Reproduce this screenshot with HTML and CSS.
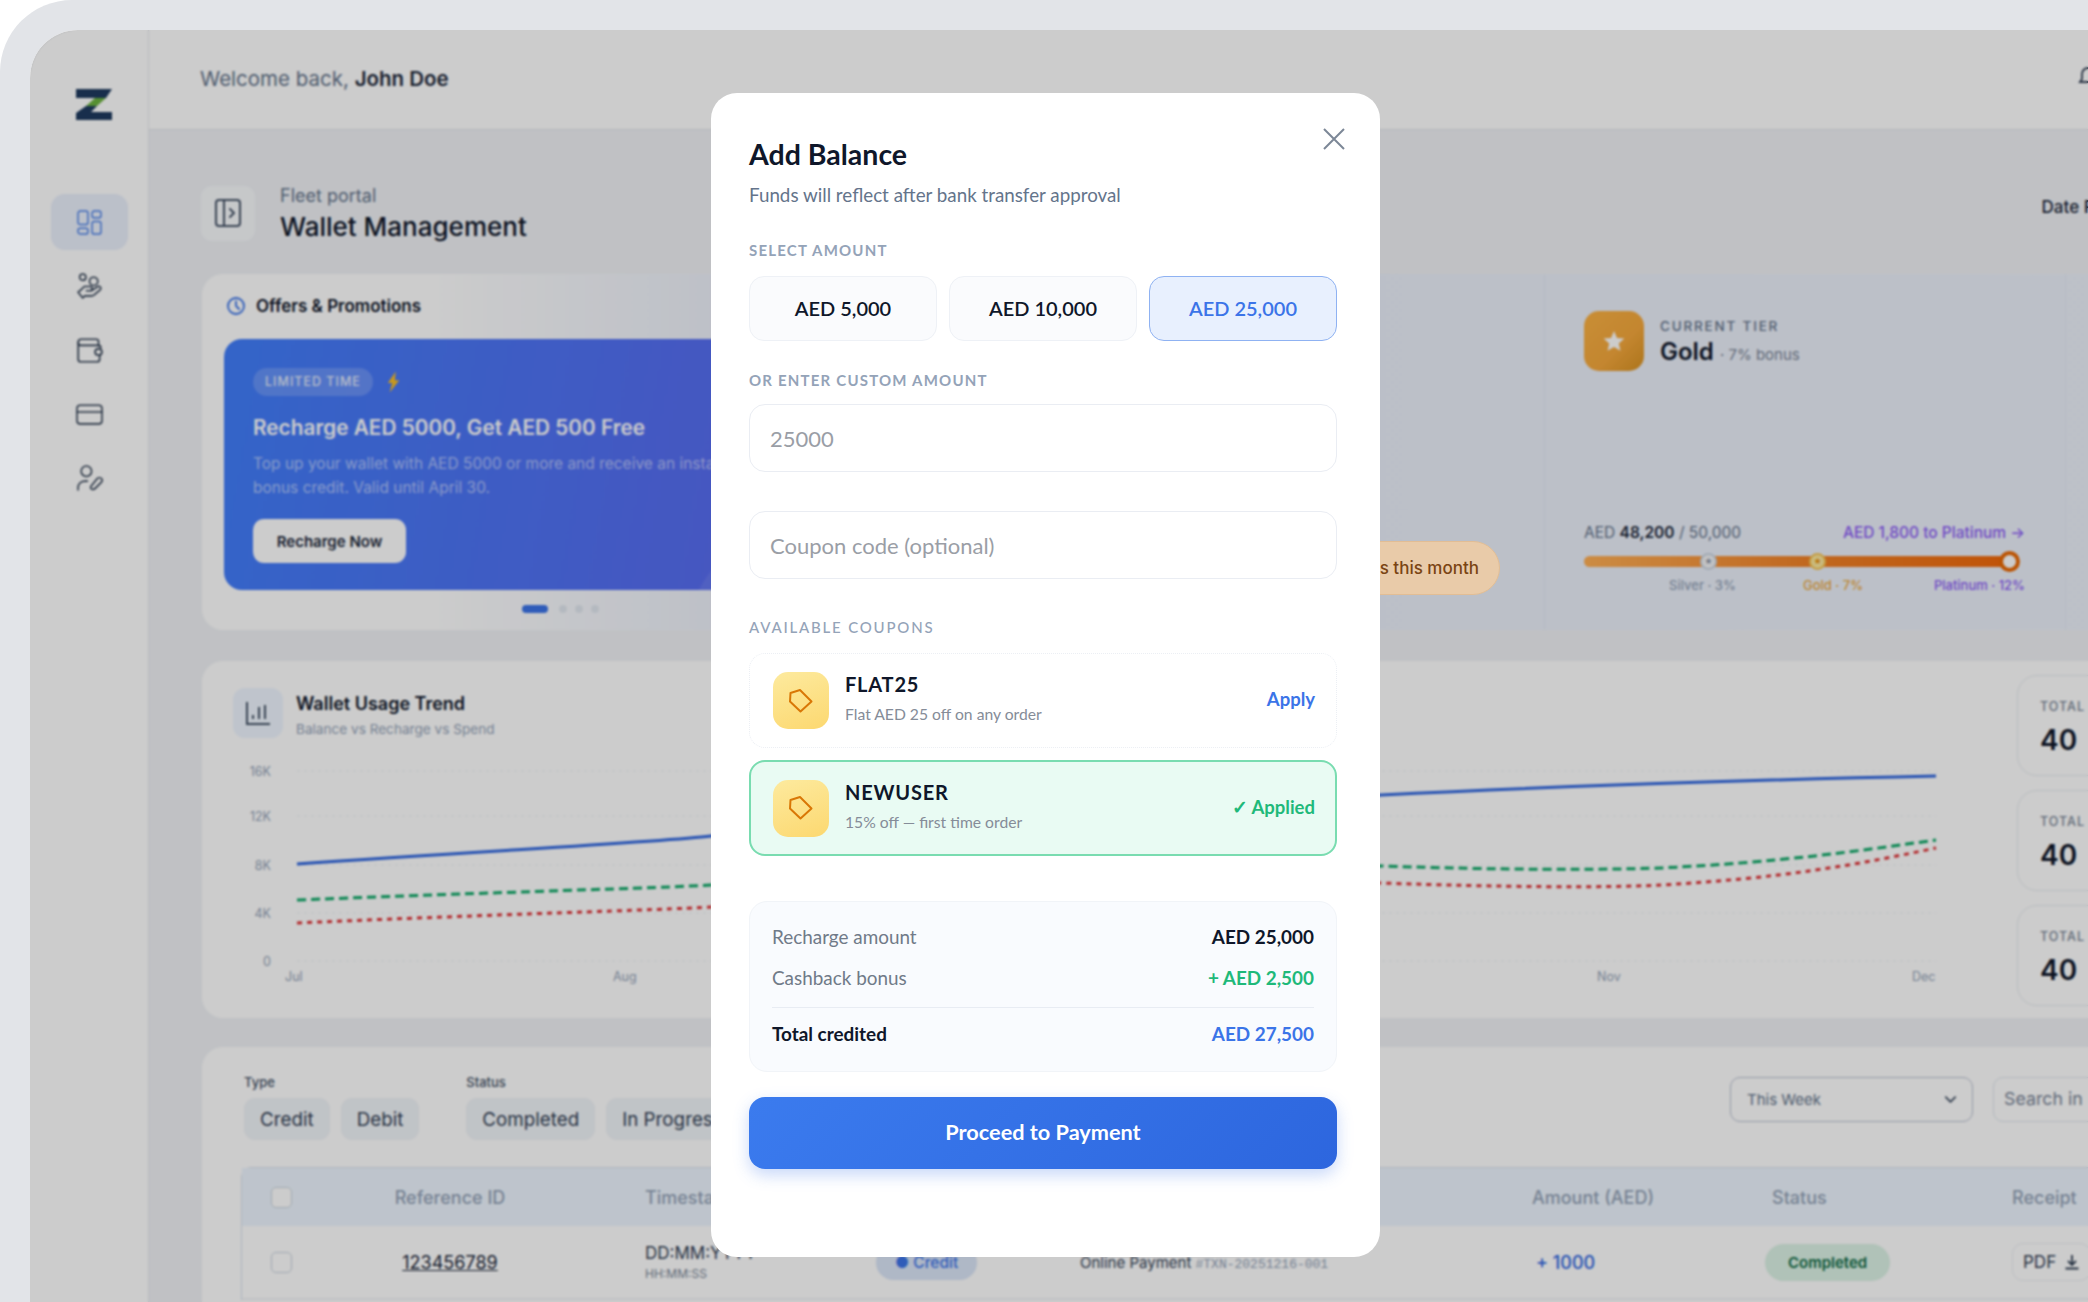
FILE: index.html
```html
<!DOCTYPE html>
<html lang="en">
<head>
<meta charset="utf-8">
<title>Wallet Management</title>
<link rel="stylesheet" href="styles.css">
</head>
<body>
<div class="shell">
  <div class="app">
    <aside class="sidebar">
      <svg class="logo" viewBox="0 0 36 31"><path fill="#1e3a5f" d="M0 0H36L30 9H0ZM10 17H21L15 23H36V31H0V24Z"/><path fill="#6cb33f" d="M19 9H30L21 17H10Z"/></svg>
      <nav class="nav">
        <a class="nav-item active"><svg viewBox="0 0 24 24"><rect x="1" y="1" width="9.500" height="13" rx="2"/><rect x="14.500" y="1" width="8.500" height="6.500" rx="2"/><rect x="1" y="17.500" width="9.500" height="5.500" rx="2"/><rect x="14.500" y="11" width="8.500" height="12" rx="2"/></svg></a>
        <a class="nav-item"><svg viewBox="0 0 26 26"><circle cx="6.500" cy="4" r="3"/><circle cx="17" cy="8" r="4"/><path d="M4 17l4-4h5.500a2 2 0 0 1 0 4H10m5 0l6-4a2 2 0 0 1 2.500 3l-6 5c-1 .7-2 1-3 1H8.500L6.500 24 2 18.500l3-2.500"/></svg></a>
        <a class="nav-item"><svg viewBox="0 0 24 24"><path d="M20 8V4a2 2 0 0 0-2-2H4.500A2.500 2.500 0 0 0 2 4.500V20a2 2 0 0 0 2 2h15a2 2 0 0 0 2-2v-4"/><path d="M2 5c0 1.500 1 2.500 2.500 2.500H20a2 2 0 0 1 2 2"/><rect x="17" y="10.500" width="6" height="5.500" rx="2.700"/></svg></a>
        <a class="nav-item"><svg viewBox="0 0 26 24"><rect x="1" y="3" width="24" height="18" rx="3"/><path d="M1 9.500H25"/></svg></a>
        <a class="nav-item"><svg viewBox="0 0 26 26"><circle cx="10" cy="6" r="5"/><path d="M2 24v-2c0-4 3-6.500 7-6.500h2"/><path d="M16 23.500c-1.500 0-2.500-1.500-1.500-3l6-7.500c1-1 3-1 4 0s.7 2.500 0 3.500l-6 6c-.7.700-1.500 1-2.500 1z"/></svg></a>
      </nav>
    </aside>
    <div class="main">
      <header class="topbar">
        <p class="welcome">Welcome back, <b>John Doe</b></p>
        <svg class="bell" viewBox="0 0 24 24"><path d="M6 17l2-3V9a6 6 0 0 1 12 0v5l2 3z"/></svg>
      </header>
      <div class="content">
        <div class="page-head">
          <button class="toggle"><svg viewBox="0 0 26 28"><rect x="1" y="1" width="24" height="26" rx="3"/><path d="M9 1V27M15 10l4 4-4 4"/></svg></button>
          <div class="page-titles">
            <p class="crumb">Fleet portal</p>
            <h1>Wallet Management</h1>
          </div>
          <span class="date-label">Date Range</span>
        </div>

        <section class="offers">
          <div class="offers-left">
            <h2 class="offers-title"><svg viewBox="0 0 20 20"><circle cx="10" cy="10" r="8"/><path d="M10 5.500V10l3 3"/></svg>Offers &amp; Promotions</h2>
            <div class="promo">
              <span class="promo-circle"></span>
              <div class="promo-tag"><span class="badge">LIMITED TIME</span><svg viewBox="0 0 16 24"><path d="M10 0L1 13h5L3 24l11-14H9z"/></svg></div>
              <h3>Recharge AED 5000, Get AED 500 Free</h3>
              <p>Top up your wallet with AED 5000 or more and receive an instant<br>bonus credit. Valid until April 30.</p>
              <button class="promo-btn">Recharge Now</button>
            </div>
            <div class="dots"><i class="on"></i><i></i><i></i><i></i></div>
          </div>
          <div class="offers-mid"><span class="pill">3 recharges this month</span></div>
          <div class="tier">
            <div class="tier-head">
              <span class="tier-star"><svg viewBox="0 0 24 24"><path d="M12 2l3 6.900 7.400.7-5.600 4.900 1.700 7.300L12 17.900l-6.500 3.900 1.700-7.300L1.600 9.600 9 8.900z"/></svg></span>
              <div class="tier-text">
                <p class="tier-label">CURRENT TIER</p>
                <p class="tier-name">Gold <small>· 7% bonus</small></p>
              </div>
            </div>
            <div class="tier-bottom">
              <div class="tier-stats"><span>AED <b>48,200</b> / 50,000</span><span class="to-plat">AED 1,800 to Platinum →</span></div>
              <div class="bar">
                <i class="node silver">★</i><i class="node gold">★</i><i class="knob"></i>
              </div>
              <div class="bar-labels"><span class="l-silver">Silver · 3%</span><span class="l-gold">Gold · 7%</span><span class="l-plat">Platinum · 12%</span></div>
            </div>
          </div>
          <div class="offers-end"></div>
        </section>

        <section class="trend">
          <div class="trend-main">
            <div class="trend-head">
              <span class="trend-icon"><svg viewBox="0 0 26 26"><path d="M2 2V24H25M8 19v-4M14 19V7M20 19V5"/></svg></span>
              <div><h2>Wallet Usage Trend</h2><p>Balance vs Recharge vs Spend</p></div>
            </div>
            <svg class="chart" viewBox="0 0 1770 232" width="1770" height="232">
              <g class="grid"><path d="M96 11H1735M96 56H1735M96 105H1735M96 153H1735M96 201H1735"/></g>
              <g class="ax"><text x="70" y="16">16K</text><text x="70" y="61">12K</text><text x="70" y="110">8K</text><text x="70" y="158">4K</text><text x="70" y="206">0</text></g>
              <g class="ax-x"><text x="84" y="221">Jul</text><text x="412" y="221">Aug</text><text x="1396" y="221">Nov</text><text x="1711" y="221">Dec</text></g>
              <path class="l-blue" d="M96 104C300 90 460 82 510 76C800 55 1000 45 1180 35C1380 25 1550 20 1735 16"/>
              <path class="l-green" d="M96 140C300 132 460 128 510 125C800 112 1050 106 1180 106C1300 110 1400 110 1460 108C1580 102 1650 92 1735 80"/>
              <path class="l-red" d="M96 163C300 154 460 150 510 147C800 135 1050 122 1180 123C1300 127 1400 128 1460 125C1580 118 1650 106 1735 88"/>
            </svg>
          </div>
          <div class="stats">
            <div class="stat"><span>TOTAL</span><b>40</b></div>
            <div class="stat"><span>TOTAL</span><b>40</b></div>
            <div class="stat"><span>TOTAL</span><b>40</b></div>
          </div>
        </section>

        <section class="tx">
          <div class="filters">
            <div class="fgroup"><label>Type</label><div class="chips"><span class="chip">Credit</span><span class="chip">Debit</span></div></div>
            <div class="fgroup"><label>Status</label><div class="chips"><span class="chip">Completed</span><span class="chip">In Progress</span></div></div>
            <div class="ftools">
              <div class="select">This Week<svg viewBox="0 0 16 16"><path d="M3 5.500l5 5 5-5"/></svg></div>
              <div class="search">Search in</div>
            </div>
          </div>
          <div class="table">
            <div class="row thead">
              <span class="c-check"><i class="box"></i></span><span class="c-ref">Reference ID</span><span class="c-time">Timestamp</span><span class="c-type"></span><span class="c-desc"></span><span class="c-amt">Amount (AED)</span><span class="c-status">Status</span><span class="c-rec">Receipt</span>
            </div>
            <div class="row tbody">
              <span class="c-check"><i class="box"></i></span>
              <span class="c-ref"><u class="refid">123456789</u></span>
              <span class="c-time"><span class="date">DD:MM:YYYY</span><span class="time">HH:MM:SS</span></span>
              <span class="c-type"><span class="credit">● Credit</span></span>
              <span class="c-desc">Online Payment <code>#TXN-20251216-001</code></span>
              <span class="c-amt"><span class="amt">+ 1000</span></span>
              <span class="c-status"><span class="done">Completed</span></span>
              <span class="c-rec"><span class="pdf">PDF <svg viewBox="0 0 16 16"><path d="M8 1v9M4 7l4 4 4-4M1.500 14.500h13"/></svg></span></span>
            </div>
          </div>
        </section>
      </div>
    </div>
  </div>
  <div class="overlay"></div>
  <div class="modal">
    <svg class="close" viewBox="0 0 22 22"><path d="M1 1L21 21M21 1L1 21"/></svg>
    <h2 class="m-title">Add Balance</h2>
    <p class="m-sub">Funds will reflect after bank transfer approval</p>
    <p class="m-label first">SELECT AMOUNT</p>
    <div class="amounts"><button class="amount">AED 5,000</button><button class="amount">AED 10,000</button><button class="amount sel">AED 25,000</button></div>
    <p class="m-label second">OR ENTER CUSTOM AMOUNT</p>
    <input class="m-input" placeholder="25000">
    <input class="m-input coupon-input" placeholder="Coupon code (optional)">
    <p class="m-label third">AVAILABLE COUPONS</p>
    <div class="coupon">
      <span class="c-icon"><svg viewBox="0 0 26 26"><path d="M2.500 5L12 2l11.500 11.500-11 10L2 13.500z"/></svg></span>
      <div class="c-text"><strong>FLAT25</strong><span>Flat AED 25 off on any order</span></div>
      <span class="apply">Apply</span>
    </div>
    <div class="coupon applied">
      <span class="c-icon"><svg viewBox="0 0 26 26"><path d="M2.500 5L12 2l11.500 11.500-11 10L2 13.500z"/></svg></span>
      <div class="c-text"><strong>NEWUSER</strong><span>15% off — first time order</span></div>
      <span class="apply ok">✓ Applied</span>
    </div>
    <div class="summary">
      <div class="s-row"><span>Recharge amount</span><b>AED 25,000</b></div>
      <div class="s-row"><span>Cashback bonus</span><b class="green">+ AED 2,500</b></div>
      <div class="s-row total"><span>Total credited</span><b class="blue">AED 27,500</b></div>
    </div>
    <button class="proceed">Proceed to Payment</button>
  </div>
</div>
</body>
</html>
```

FILE: styles.css
```css
*{box-sizing:border-box;margin:0;padding:0}
html,body{height:100%;background:#fff;overflow:hidden}
body{font-family:"Inter","Liberation Sans",sans-serif;color:#1e293b}
.shell{position:relative;width:2088px;height:1302px;overflow:hidden;background:#e2e4e8;border-top-left-radius:72px;padding:30px 0 0 30px}
.app{display:flex;width:2058px;height:1272px;border-top-left-radius:48px;overflow:hidden;background:#fff}
.sidebar{flex:0 0 119px;background:#fff;border-right:1px solid #e9ebef;display:flex;flex-direction:column;align-items:center}
.logo{width:36px;height:31px;margin-top:59px;margin-left:10px}
.nav{display:flex;flex-direction:column;gap:8px;margin-top:74px}
.nav-item{display:flex;align-items:center;justify-content:center;width:77px;height:56px;border-radius:14px}
.nav-item svg{width:27px;height:27px;fill:none;stroke:#334155;stroke-width:1.500;stroke-linecap:round;stroke-linejoin:round}
.nav-item.active{background:#eaf0fc}
.nav-item.active svg{stroke:#4a80e8;width:25px;height:25px;stroke-width:1.400}
.main{flex:1;min-width:0;background:#f0f2f6;display:flex;flex-direction:column;overflow:hidden}
.topbar{flex:0 0 100px;background:#fff;border-bottom:1px solid #e4e6ea;padding-left:51px;display:flex;align-items:center;justify-content:space-between;position:relative}
.welcome{font-size:20.500px;color:#64748b;margin-top:-2px}
.welcome b{color:#1e293b;font-weight:600}
.bell{width:24px;height:24px;fill:none;stroke:#334155;stroke-width:1.800;margin-right:-10px;margin-top:-6px}
.content{padding:55px 0 0 52px;width:2000px}
.page-head{display:flex;align-items:center;height:56px;width:1934px}
.toggle{width:54px;height:55px;border:0;border-radius:11px;background:#f8fafc;display:flex;align-items:center;justify-content:center}
.toggle svg{width:26px;height:28px;fill:none;stroke:#475569;stroke-width:2;stroke-linecap:round;stroke-linejoin:round}
.page-titles{margin-left:25px;flex:1;padding-top:5px}
.crumb{font-size:18px;color:#64748b;line-height:24px;margin-top:-3px}
h1{font-size:26px;font-weight:500;color:#0f172a;line-height:34px;margin-top:2px}
.date-label{font-size:17px;font-weight:500;color:#1e293b;margin-top:-12px;white-space:nowrap}

.offers{display:flex;margin-top:32px;height:358px;border-radius:22px 0 0 22px;width:1950px;background:linear-gradient(90deg,#fff 0,#fff 12%,#e9eefa 30%,#edf2fb 100%);border:1px solid #f1f3f6;border-right:0}
.offers-left{flex:0 0 860px;padding:0 0 0 22px;display:flex;flex-direction:column}
.offers-title{display:flex;align-items:center;gap:10px;font-size:17px;font-weight:600;color:#0f172a;height:65px;padding:0 0 2px 2px}
.offers-title svg{width:20px;height:20px;fill:none;stroke:#3b74e8;stroke-width:1.800;stroke-linecap:round}
.promo{position:relative;overflow:hidden;height:251px;border-radius:18px;padding:29px 0 0 29px;background:linear-gradient(100deg,#417efb 0,#5c6af0 70%,#6060f0 100%);color:#fff}
.promo-circle{position:absolute;left:458px;top:170px;width:300px;height:300px;border-radius:50%;background:rgba(255,255,255,.08)}
.promo-tag{display:flex;align-items:center;gap:14px;position:relative}
.badge{background:rgba(255,255,255,.18);font-size:12.500px;font-weight:500;letter-spacing:1px;border-radius:14px;padding:6px 12px;line-height:15px;color:#e3ebfc;height:28px;display:block;white-space:nowrap}
.promo-tag svg{width:14px;height:22px;fill:#fbbf24}
.promo h3{font-size:20.800px;font-weight:600;margin-top:18px;line-height:28px;position:relative;white-space:nowrap}
.promo p{font-size:15.500px;color:rgba(255,255,255,.55);line-height:24px;margin-top:10px;position:relative;white-space:nowrap}
.promo-btn{display:block;position:relative;margin-top:19px;width:153px;height:44px;border:0;border-radius:11px;background:#fff;font:600 15px "Inter",sans-serif;color:#1e293b}
.dots{display:flex;align-items:center;gap:8px;height:38px;padding-left:298px}
.dots i{width:8px;height:8px;border-radius:50%;background:#e2e8f0}
.dots i.on{width:26px;height:8px;border-radius:4px;background:#3b74e8;margin-right:3px}
.offers-mid{flex:0 0 483px;display:flex;align-items:flex-end;justify-content:flex-end;padding:0 44px 35px 0;border-right:1px solid #e3e9f4}
.pill{position:relative;z-index:2;display:flex;align-items:center;height:54px;padding:0 20px 0 30px;border-radius:27px;background:#e9cba9;border:1px solid #e2bd94;font-size:17px;font-weight:500;color:#7a4413;white-space:nowrap}
.tier{flex:0 0 521px;padding:37px 40px 0 39px;border-right:1px solid #e3e9f4;display:flex;flex-direction:column;justify-content:space-between}
.tier-head{display:flex;gap:16px;align-items:center}
.tier-star{width:60px;height:60px;border-radius:15px;background:linear-gradient(135deg,#fbb244 0,#f5a83c 60%,#d89222 100%);display:flex;align-items:center;justify-content:center}
.tier-star svg{width:24px;height:24px;fill:#fff}
.tier-text{padding-top:5px}
.tier-label{font-size:13.500px;letter-spacing:1.800px;color:#64748b;font-weight:500;line-height:18px}
.tier-name{font-size:24px;font-weight:600;color:#0f172a;line-height:32px;margin-top:1px}
.tier-name small{font-size:15px;font-weight:400;color:#7b8698}
.tier-bottom{padding-bottom:35px}
.tier-stats{display:flex;justify-content:space-between;font-size:15.500px;color:#64748b;line-height:20px}
.tier-stats b{color:#1e293b;font-weight:600}
.to-plat{color:#8b5cf6;font-weight:500}
.bar{position:relative;height:11px;width:431px;margin-top:13px;border-radius:6px;background:linear-gradient(90deg,#ffaf55 0,#f2842a 50%,#f0680a 100%)}
.node{position:absolute;top:-3px;width:17px;height:17px;border-radius:50%;background:#f3f4f6;border:2px solid #cbd5e1;display:flex;align-items:center;justify-content:center;font-size:9px;line-height:1;font-style:normal;font-family:"DejaVu Sans",sans-serif;color:#8a94a6}
.node.silver{left:116px}
.node.gold{left:225px;background:#fdeaa0;border-color:#f6c453;color:#e8900c}
.knob{position:absolute;right:-5px;top:-5px;width:21px;height:21px;border-radius:50%;background:#fff;border:4px solid #ea6a05}
.bar-labels{position:relative;height:18px;margin-top:10px;font-size:13px;font-weight:500}
.bar-labels span{position:absolute;top:0;white-space:nowrap}
.l-silver{left:85px;color:#94a3b8}
.l-gold{left:219px;color:#eaa93f}
.l-plat{right:0;color:#8b5cf6}
.offers-end{flex:1}

.trend{display:flex;margin-top:29px;height:359px;border-radius:22px 0 0 22px;background:#fff;width:1950px;border:1px solid #f1f3f6;border-right:0}
.trend-main{flex:0 0 1815px;padding:27px 0 0 31px}
.trend-head{display:flex;gap:13px;margin-bottom:21px}
.trend-icon{width:50px;height:50px;border-radius:12px;background:#eff6ff;display:flex;align-items:center;justify-content:center}
.trend-icon svg{width:26px;height:26px;fill:none;stroke:#475569;stroke-width:2}
.trend-head h2{font-size:18px;font-weight:600;color:#0f172a;line-height:26px;margin-top:3px}
.trend-head p{font-size:13.600px;color:#94a3b8;line-height:20px;margin-top:2px}
.chart{display:block;margin-left:-32px;font-family:"Inter",sans-serif;font-size:12.500px;fill:#94a3b8}
.grid path{stroke:#f1f3f6;stroke-width:1;stroke-dasharray:3 4;fill:none}
.ax text{text-anchor:end}
.l-blue,.l-green,.l-red{fill:none;stroke-width:3}
.l-blue{stroke:#2f66df}
.l-green{stroke:#0fa968;stroke-dasharray:9 5}
.l-red{stroke:#e0363a;stroke-dasharray:5 5}
.stats{display:flex;flex-direction:column;gap:14px;padding-top:14px}
.stat{width:200px;height:101px;border:1.500px solid #e8ecf2;border-radius:20px;padding:22px 0 0 22px;display:flex;flex-direction:column}
.stat span{font-size:12.500px;font-weight:500;letter-spacing:1px;color:#7b8798;line-height:18px}
.stat b{font-size:28px;font-weight:600;color:#0f172a;line-height:36px;margin-top:6px}

.tx{margin-top:27px;height:400px;width:1950px;background:#fff;border-radius:22px 0 0 0;padding:0 0 0 39px;border:1px solid #f1f3f6;border-right:0}
.filters{display:flex;gap:47px;height:120px;padding:26px 0 0 3px;position:relative}
.fgroup label{display:block;font-size:13px;color:#475569;line-height:18px;font-weight:500}
.chips{display:flex;gap:11px;margin-top:7px}
.chip{display:flex;align-items:center;height:42px;padding:0 16px;border-radius:11px;background:#f1f5f9;font-size:18.800px;color:#334155;white-space:nowrap}
.ftools{position:absolute;left:1489px;top:30px;display:flex;gap:20px}
.select{display:flex;align-items:center;justify-content:space-between;width:243px;height:45px;border:1.500px solid #bcc3d4;border-radius:10px;padding:0 14px 0 16px;font-size:15px;color:#64748b}
.select svg{width:15px;height:15px;fill:none;stroke:#475569;stroke-width:2;stroke-linecap:round;stroke-linejoin:round}
.search{width:200px;height:45px;border:1.500px solid #e2e8f0;border-radius:10px;padding-left:10px;font-size:17.800px;line-height:42px;color:#7a8598;white-space:nowrap}
.table{width:1900px;border:1px solid #dbe3f0;border-bottom:0;border-radius:10px 0 0 0}
.row{display:flex;align-items:center}
.thead{height:58px;background:#eef6ff;font-size:18px;font-weight:500;color:#94a3b8}
.tbody{height:74px;border-bottom:2px solid #f1f3f6}
.c-check{flex:0 0 28px;margin-left:29px}
.box{display:block;width:21px;height:21px;border:1.500px solid #cbd5e1;border-radius:5px;background:#fff}
.c-ref{flex:0 0 302px;text-align:center}
.refid{font-size:18px;color:#1e293b}
.c-time{flex:0 0 275px;padding-left:44px;display:flex;flex-direction:column;white-space:nowrap}
.date{font-size:17px;color:#334155;line-height:24px}
.time{font-size:12px;color:#7b8798;line-height:18px}
.c-type{flex:0 0 204px}
.credit{display:inline-block;background:#dbe6f8;border-radius:18px;padding:8px 19px;font-size:15.500px;font-weight:500;color:#3b74e8;white-space:nowrap}
.c-desc{flex:0 0 452px;font-size:15px;color:#334155;white-space:nowrap}
.c-desc code{font:13px "Liberation Mono",monospace;color:#94a3b8}
.c-amt{flex:0 0 240px}
.amt{font-size:18px;color:#2f66df;font-weight:500;margin-left:4px}
.c-status{flex:0 0 240px}
.done{display:inline-block;font-size:15px;font-weight:600;color:#0f6b45;background:#dcf3e6;border-radius:20px;padding:9px 23px;margin-left:-7px}
.c-rec{flex:0 0 120px}
.pdf{display:inline-flex;align-items:center;gap:8px;font-size:17px;color:#334155;border:1.500px solid #eef1f5;border-radius:11px;height:38px;padding:0 10px;white-space:nowrap}
.pdf svg{width:16px;height:16px;fill:none;stroke:#334155;stroke-width:1.800}

.overlay{position:absolute;left:30px;top:30px;right:0;bottom:0;background:rgba(0,0,0,.2);backdrop-filter:blur(.8px);border-top-left-radius:48px;z-index:1}
.modal{position:absolute;z-index:3;left:711px;top:93px;width:669px;height:1164px;background:#fff;border-radius:26px;padding:43px 43px 0 38px;font-family:"Lato","Liberation Sans",sans-serif;color:#0f172a}
.close{position:absolute;right:35px;top:35px;width:22px;height:22px;fill:none;stroke:#7c8797;stroke-width:2}
.m-title{font-size:28.500px;font-weight:700;line-height:36px}
.m-sub{font-size:18.800px;color:#64748b;line-height:24px;margin-top:11px}
.m-label{font-size:15px;font-weight:700;letter-spacing:1.200px;color:#94a3b8;line-height:20px}
.m-label.first{margin-top:33px}
.m-label.second{margin-top:29px}
.m-label.third{margin-top:38px;font-weight:500;letter-spacing:1.800px}
.amounts{display:flex;gap:12px;margin-top:16px}
.amount{flex:1;height:65px;border:1.500px solid #eef1f6;border-radius:15px;background:#fafbfd;font:600 20px "Lato",sans-serif;color:#0f172a;padding-bottom:2px}
.amount.sel{background:#e8f0fe;border-color:#8fb2f2;color:#3b74e8}
.m-input{display:block;width:100%;height:68px;margin-top:14px;border:1.500px solid #eaedf3;border-radius:16px;padding:0 20px;font:22px "Lato",sans-serif;color:#1e293b;outline:0;background:#fff}
.m-input::placeholder{color:#9a9ea6;opacity:1}
.m-input.coupon-input{margin-top:39px}
.coupon{display:flex;align-items:center;height:95px;margin-top:16px;padding:0 21px 0 23px;border:1.500px dotted #eceff4;border-radius:16px;background:#fff}
.coupon.applied{height:96px;margin-top:12px;background:#e9fbf3;border:2px solid #79dcb0;padding:0 20px 0 22px}
.c-icon{width:56px;height:57px;border-radius:15px;background:linear-gradient(160deg,#fdea9e,#fcd870);display:flex;align-items:center;justify-content:center;flex:none}
.c-icon svg{width:26px;height:26px;fill:none;stroke:#d97706;stroke-width:2;stroke-linejoin:round}
.c-text{flex:1;margin-left:16px;display:flex;flex-direction:column}
.c-text strong{font-size:20px;font-weight:700;letter-spacing:.8px;line-height:26px;margin-top:-6px}
.c-text span{font-size:15.700px;color:#858c98;line-height:20px;margin-top:7px}
.apply{font-size:18.500px;font-weight:700;color:#3b74e8;margin-top:-3px}
.apply.ok{color:#1fb97a}
.summary{margin-top:45px;height:171px;border:1.500px solid #f1f4f8;border-radius:18px;background:#f9fbfe;padding:14px 22px 0}
.s-row{display:flex;justify-content:space-between;align-items:center;height:41px;font-size:18.900px;color:#707a88}
.s-row b{font-weight:700;color:#0f172a}
.s-row b.green{color:#1fb97a}
.s-row b.blue{color:#3b74e8}
.s-row.total{margin-top:9px;border-top:1.500px solid #e8ecf3;height:52px;padding-top:0;color:#0f172a;font-weight:700}
.proceed{display:block;width:100%;height:72px;margin-top:25px;border:0;border-radius:16px;background:linear-gradient(135deg,#3b7bee,#2d66de);box-shadow:0 6px 16px rgba(59,116,232,.28);color:#fff;font:700 21.700px "Lato",sans-serif;padding-bottom:3px}
```
